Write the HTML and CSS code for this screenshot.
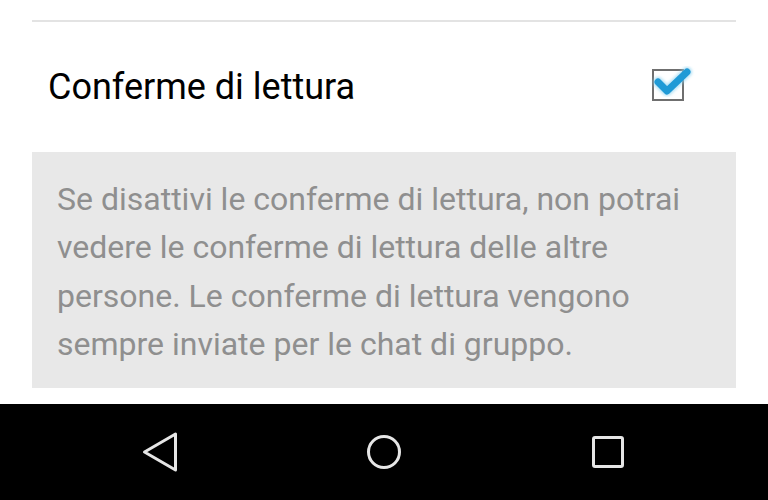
FILE: index.html
```html
<!DOCTYPE html>
<html lang="it">
<head>
<meta charset="utf-8">
<link rel="stylesheet" href="styles.css">
</head>
<body>
<div class="screen">
  <div class="content">
    <div class="divider"></div>
    <div class="row">
      <span class="row-title">Conferme di lettura</span>
      <svg class="checkbox" width="48" height="48" viewBox="0 0 48 48">
        <defs>
          <filter id="glow" x="-30%" y="-30%" width="160%" height="160%">
            <feGaussianBlur stdDeviation="1.6"/>
          </filter>
        </defs>
        <rect x="5" y="9" width="30" height="30" fill="none" stroke="#6f6f6f" stroke-width="2"/>
        <polyline points="10,21 19,30 39,11" fill="none" stroke="#8fd3f0" stroke-width="10" stroke-linecap="round" stroke-linejoin="round" filter="url(#glow)" opacity="0.7"/>
        <polyline points="10,21 19,30 39,11" fill="none" stroke="#1f9ad6" stroke-width="7" stroke-linecap="round" stroke-linejoin="round"/>
      </svg>
    </div>
    <div class="note">
      <p>Se disattivi le conferme di lettura, non potrai vedere le conferme di lettura delle altre persone. Le conferme di lettura vengono sempre inviate per le chat di gruppo.</p>
    </div>
  </div>
  <nav class="navbar">
    <div class="nav-btn">
      <svg width="48" height="48" viewBox="0 0 48 48">
        <path d="M8.5 24 L39.5 6 L39.5 42 Z" fill="none" stroke="#e6e6e6" stroke-width="3" stroke-linejoin="round"/>
      </svg>
    </div>
    <div class="nav-btn">
      <svg width="48" height="48" viewBox="0 0 48 48">
        <circle cx="24" cy="24" r="15.5" fill="none" stroke="#e6e6e6" stroke-width="3"/>
      </svg>
    </div>
    <div class="nav-btn">
      <svg width="48" height="48" viewBox="0 0 48 48">
        <rect x="9.5" y="9.5" width="29" height="29" rx="1.5" fill="none" stroke="#e6e6e6" stroke-width="3"/>
      </svg>
    </div>
  </nav>
</div>
</body>
</html>
```

FILE: styles.css
```css
html, body {
  margin: 0;
  padding: 0;
  background: #ffffff;
}

.screen {
  width: 768px;
  height: 500px;
  display: flex;
  flex-direction: column;
  font-family: Roboto, "Noto Sans", sans-serif;
  overflow: hidden;
}

.content {
  flex: 1;
  padding: 20px 32px 0;
}

.divider {
  height: 2px;
  background: #e3e3e3;
}

.row {
  height: 130px;
  display: flex;
  align-items: center;
  justify-content: space-between;
  padding: 0 40px 0 16px;
}

.row-title {
  font-size: 36px;
  color: #000000;
  margin-bottom: 1px;
}

.checkbox {
  display: block;
  margin-top: -4px;
}

.note {
  background: #e8e8e8;
  height: 236px;
  box-sizing: border-box;
  padding: 23px 24px 0 25px;
}

.note p {
  margin: 0;
  font-size: 32px;
  line-height: 48.4px;
  color: #8f8f8f;
}

.navbar {
  height: 96px;
  background: #000000;
  display: flex;
  justify-content: center;
  align-items: center;
  gap: 160px;
}

.nav-btn {
  width: 64px;
  display: flex;
  justify-content: center;
  align-items: center;
}

.nav-btn svg {
  display: block;
}
```
